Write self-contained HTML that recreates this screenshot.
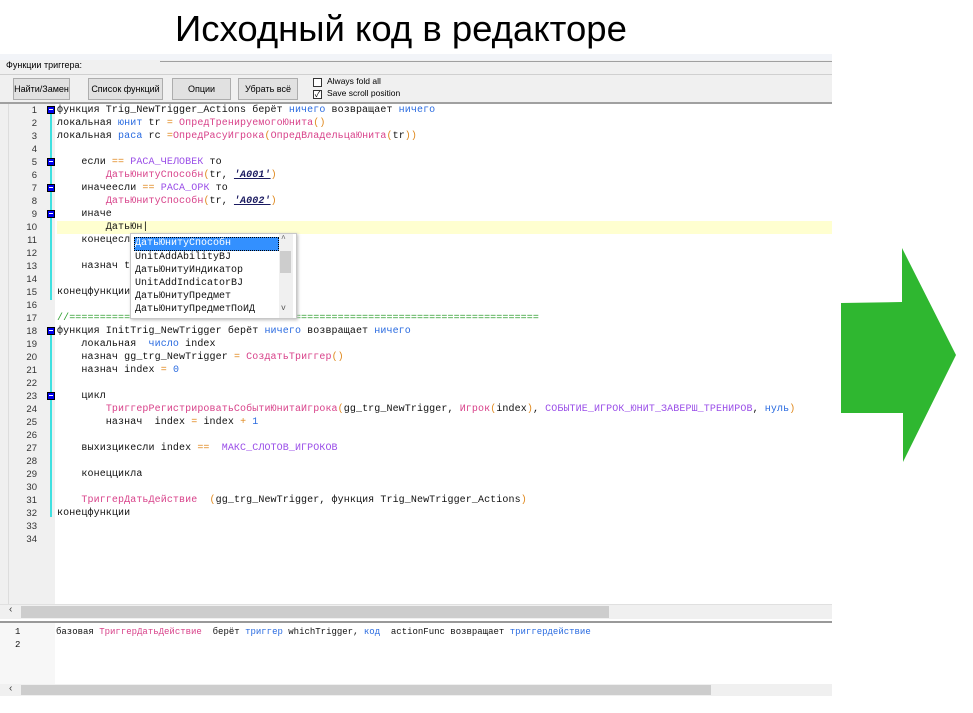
<!DOCTYPE html>
<html><head><meta charset="utf-8"><style>
*{margin:0;padding:0;box-sizing:border-box}
body{width:973px;height:713px;background:#fff;position:relative;overflow:hidden;font-family:"Liberation Sans","Noto Sans CJK SC",sans-serif}
.abs{position:absolute}
.title{left:175px;top:8px;font-size:36.5px;color:#000;white-space:nowrap}
.btn{position:absolute;top:78px;height:22px;background:#e1e1e1;border:1px solid #adadad;font-size:9px;text-align:center;line-height:20px;color:#000}
.code{font-family:"Liberation Mono","DejaVu Sans Mono",monospace;font-size:10px;white-space:pre;color:#111}
.ln{position:absolute;left:57px;height:13px;line-height:13px;letter-spacing:0.1px}
.num{position:absolute;left:10px;width:27px;text-align:right;height:13px;line-height:13px;font-family:"Liberation Sans",sans-serif;font-size:9.5px;color:#333}
.b{color:#2a6be0}.p{color:#d8428a}.v{color:#9a4ee8}.o{color:#e08a20}.s{color:#1a1a60;font-style:italic;font-weight:bold;text-decoration:underline}.g{color:#30a030}
.fold{position:absolute;left:47px;width:8px;height:8px;background:#0000ee;border:1px solid #000}
.fold:after{content:"";position:absolute;left:1px;top:2px;width:4px;height:1px;background:#fff}
</style></head><body>
<div class="abs title">Исходный код в редакторе</div>
<div class="abs" style="left:0;top:54px;width:832px;height:6px;background:#f2f4f8"></div>
<div class="abs" style="left:0;top:60px;width:832px;height:44px;background:#f0f0f0"></div>
<div class="abs" style="left:160px;top:61px;width:672px;height:1px;background:#a0a0a0"></div>
<div class="abs" style="left:6px;top:60px;font-size:9px;color:#000">Функции триггера:</div>
<div class="abs" style="left:0;top:74px;width:832px;height:1px;background:#d0d0d0"></div>
<div class="btn" style="left:13px;width:57px">Найти/Замен</div>
<div class="btn" style="left:88px;width:75px">Список функций</div>
<div class="btn" style="left:172px;width:59px">Опции</div>
<div class="btn" style="left:238px;width:60px">Убрать всё</div>
<div class="abs" style="left:313px;top:78px;width:9px;height:9px;border:1px solid #333;background:#fff"></div>
<div class="abs" style="left:327px;top:76px;font-size:8.5px">Always fold all</div>
<div class="abs" style="left:313px;top:90px;width:9px;height:9px;border:1px solid #333;background:#fff;font-size:8px;line-height:7px;text-align:center">✓</div>
<div class="abs" style="left:327px;top:88px;font-size:8.5px">Save scroll position</div>
<div class="abs" style="left:0;top:102px;width:832px;height:2px;background:#a0a0a0"></div>
<div class="abs" style="left:0;top:104px;width:9px;height:500px;background:#f0f0f0;border-right:1px solid #ddd"></div>
<div class="abs" style="left:9px;top:104px;width:46px;height:500px;background:#f0f0f0"></div>
<div class="abs" style="left:57px;top:221px;width:775px;height:13px;background:#ffffd0"></div>
<div class="abs" style="left:50px;top:114px;width:2px;height:186px;background:#40e0e0"></div>
<div class="abs" style="left:50px;top:335px;width:2px;height:182px;background:#40e0e0"></div>
<div class="fold" style="top:106px"></div><div class="fold" style="top:158px"></div><div class="fold" style="top:184px"></div><div class="fold" style="top:210px"></div><div class="fold" style="top:327px"></div><div class="fold" style="top:392px"></div>
<div class="code">
<div class="num" style="top:104px">1</div><div class="num" style="top:117px">2</div><div class="num" style="top:130px">3</div><div class="num" style="top:143px">4</div><div class="num" style="top:156px">5</div><div class="num" style="top:169px">6</div><div class="num" style="top:182px">7</div><div class="num" style="top:195px">8</div><div class="num" style="top:208px">9</div><div class="num" style="top:221px">10</div><div class="num" style="top:234px">11</div><div class="num" style="top:247px">12</div><div class="num" style="top:260px">13</div><div class="num" style="top:273px">14</div><div class="num" style="top:286px">15</div><div class="num" style="top:299px">16</div><div class="num" style="top:312px">17</div><div class="num" style="top:325px">18</div><div class="num" style="top:338px">19</div><div class="num" style="top:351px">20</div><div class="num" style="top:364px">21</div><div class="num" style="top:377px">22</div><div class="num" style="top:390px">23</div><div class="num" style="top:403px">24</div><div class="num" style="top:416px">25</div><div class="num" style="top:429px">26</div><div class="num" style="top:442px">27</div><div class="num" style="top:455px">28</div><div class="num" style="top:468px">29</div><div class="num" style="top:481px">30</div><div class="num" style="top:494px">31</div><div class="num" style="top:507px">32</div><div class="num" style="top:520px">33</div><div class="num" style="top:533px">34</div>
<div class="ln" style="top:104px">функция Trig_NewTrigger_Actions берёт <span class="b">ничего</span> возвращает <span class="b">ничего</span></div>
<div class="ln" style="top:117px">локальная <span class="b">юнит</span> tr <span class="o">=</span> <span class="p">ОпредТренируемогоЮнита</span><span class="o">()</span></div>
<div class="ln" style="top:130px">локальная <span class="b">раса</span> rc <span class="o">=</span><span class="p">ОпредРасуИгрока</span><span class="o">(</span><span class="p">ОпредВладельцаЮнита</span><span class="o">(</span>tr<span class="o">))</span></div>
<div class="ln" style="top:156px">    если <span class="o">==</span> <span class="v">РАСА_ЧЕЛОВЕК</span> то</div>
<div class="ln" style="top:169px">        <span class="p">ДатьЮнитуСпособн</span><span class="o">(</span>tr, <span class="s">'A001'</span><span class="o">)</span></div>
<div class="ln" style="top:182px">    иначеесли <span class="o">==</span> <span class="v">РАСА_ОРК</span> то</div>
<div class="ln" style="top:195px">        <span class="p">ДатьЮнитуСпособн</span><span class="o">(</span>tr, <span class="s">'A002'</span><span class="o">)</span></div>
<div class="ln" style="top:208px">    иначе</div>
<div class="ln" style="top:221px">        ДатьЮн|</div>
<div class="ln" style="top:234px">    конецесли</div>
<div class="ln" style="top:260px">    назнач tr</div>
<div class="ln" style="top:286px">конецфункции</div>
<div class="ln g" style="top:312px">//=============================================================================</div>
<div class="ln" style="top:325px">функция InitTrig_NewTrigger берёт <span class="b">ничего</span> возвращает <span class="b">ничего</span></div>
<div class="ln" style="top:338px">    локальная  <span class="b">число</span> index</div>
<div class="ln" style="top:351px">    назнач gg_trg_NewTrigger <span class="o">=</span> <span class="p">СоздатьТриггер</span><span class="o">()</span></div>
<div class="ln" style="top:364px">    назнач index <span class="o">=</span> <span class="b">0</span></div>
<div class="ln" style="top:390px">    цикл</div>
<div class="ln" style="top:403px">        <span class="p">ТриггерРегистрироватьСобытиЮнитаИгрока</span><span class="o">(</span>gg_trg_NewTrigger, <span class="p">Игрок</span><span class="o">(</span>index<span class="o">)</span>, <span class="v">СОБЫТИЕ_ИГРОК_ЮНИТ_ЗАВЕРШ_ТРЕНИРОВ</span>, <span class="b">нуль</span><span class="o">)</span></div>
<div class="ln" style="top:416px">        назнач  index <span class="o">=</span> index <span class="o">+</span> <span class="b">1</span></div>
<div class="ln" style="top:442px">    выхизцикесли index <span class="o">==</span>  <span class="v">МАКС_СЛОТОВ_ИГРОКОВ</span></div>
<div class="ln" style="top:468px">    конеццикла</div>
<div class="ln" style="top:494px">    <span class="p">ТриггерДатьДействие</span>  <span class="o">(</span>gg_trg_NewTrigger, функция Trig_NewTrigger_Actions<span class="o">)</span></div>
<div class="ln" style="top:507px">конецфункции</div>
</div>
<div class="abs code" style="left:130px;top:233px;width:167px;height:86px;background:#fff;border:1px solid #c8c8c8;box-shadow:1px 1px 3px #bbb">
<div class="abs" style="left:3px;top:3px;width:145px;height:14px;background:#3390ff;border:1px dotted #000"></div>
<div class="abs" style="left:4px;top:3px;line-height:13px;color:#fff">ДатьЮнитуСпособн</div>
<div class="abs" style="left:4px;top:17px;line-height:13px">UnitAddAbilityBJ</div>
<div class="abs" style="left:4px;top:30px;line-height:13px">ДатьЮнитуИндикатор</div>
<div class="abs" style="left:4px;top:43px;line-height:13px">UnitAddIndicatorBJ</div>
<div class="abs" style="left:4px;top:56px;line-height:13px">ДатьЮнитуПредмет</div>
<div class="abs" style="left:4px;top:69px;line-height:13px">ДатьЮнитуПредметПоИД</div>
<div class="abs" style="left:148px;top:0;width:14px;height:84px;background:#f0f0f0"></div>
<div class="abs" style="left:149px;top:17px;width:11px;height:22px;background:#cdcdcd"></div>
<div class="abs" style="left:150px;top:1px;font-size:8px;color:#555">^</div>
<div class="abs" style="left:150px;top:70px;font-size:8px;color:#555">v</div>
</div>
<div class="abs" style="left:0;top:604px;width:832px;height:15px;background:#f0f0f0;border-top:1px solid #e0e0e0"></div>
<div class="abs" style="left:21px;top:606px;width:588px;height:12px;background:#cdcdcd"></div>
<div class="abs" style="left:9px;top:604px;font-size:10px;color:#333">‹</div>
<div class="abs" style="left:0;top:621px;width:832px;height:2px;background:#999"></div>
<div class="abs" style="left:0;top:623px;width:55px;height:62px;background:#f7f7f7"></div>
<div class="abs code" style="left:15px;top:626px;font-size:9px;line-height:13px">1<br>2</div>
<div class="abs code" style="left:56px;top:626px;font-size:9px;line-height:13px">базовая <span class="p">ТриггерДатьДействие</span>  берёт <span class="b">триггер</span> whichTrigger, <span class="b">код</span>  actionFunc возвращает <span class="b">триггердействие</span></div>
<div class="abs" style="left:0;top:684px;width:832px;height:12px;background:#f0f0f0"></div>
<div class="abs" style="left:21px;top:685px;width:690px;height:10px;background:#cdcdcd"></div>
<div class="abs" style="left:9px;top:683px;font-size:10px;color:#333">‹</div>
<svg class="abs" style="left:0;top:0" width="973" height="713"><polygon points="841,303 902,302 902,248 956,355 903,462 903,413 841,413" fill="#2fb730"/></svg>
</body></html>
